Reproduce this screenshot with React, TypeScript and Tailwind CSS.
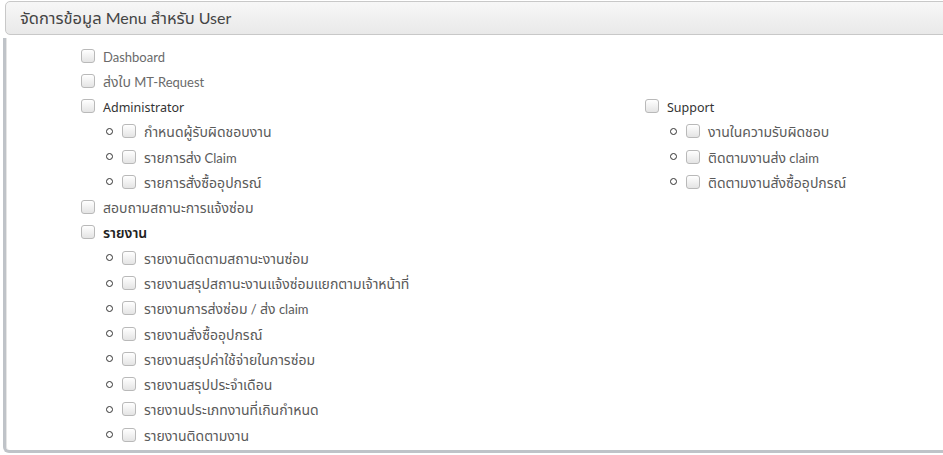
import React from "react";

const font = { fontFamily: '"Noto Sans", "Noto Sans Thai", Tahoma, sans-serif' };

function Mixed({ text, thai = "text-[14px]", latin = "text-[13px]" }: { text: string; thai?: string; latin?: string }) {
  const parts = text.split(/([\u0E00-\u0E7F]+)/).filter((p) => p.length > 0);
  return (
    <>
      {parts.map((p, i) =>
        /[\u0E00-\u0E7F]/.test(p) ? (
          <span key={i} className={thai}>
            {p}
          </span>
        ) : (
          <span key={i} className={latin} style={{ fontFamily: 'Lato, "Noto Sans", sans-serif' }}>
            {p}
          </span>
        )
      )}
    </>
  );
}

function Box() {
  return (
    <span className="inline-block w-[14px] h-[14px] rounded-[3px] border border-[#b9b9b9] bg-gradient-to-b from-[#ffffff] to-[#e4e4e4] shrink-0" />
  );
}

function Row({ label, cls = "text-[#5a5a5a]", plain = false }: { label: string; cls?: string; plain?: boolean }) {
  return (
    <div className="flex items-center h-[25.27px] leading-none">
      <Box />
      <span className={`ml-[8px] whitespace-nowrap ${cls}`}>
        {plain ? <span className="text-[12.5px]">{label}</span> : <Mixed text={label} />}
      </span>
    </div>
  );
}

function Sub({ label }: { label: string }) {
  return (
    <div className="flex items-center h-[25.27px] leading-none">
      <span className="inline-block w-[7px] h-[7px] rounded-full border-[1.5px] border-[#333] shrink-0 ml-[25px]" />
      <span className="ml-[9px] flex items-center">
        <Box />
        <span className="ml-[8px] text-[#5a5a5a] whitespace-nowrap">
          <Mixed text={label} />
        </span>
      </span>
    </div>
  );
}

export default function App() {
  return (
    <div className="w-[943px] h-[455px] bg-white overflow-hidden relative" style={font}>
      <div className="ml-[5px] mt-[1px] w-[945px] h-[34px] rounded-[5px] border border-[#c8c8c8] bg-gradient-to-b from-[#f7f7f7] to-[#e9e9e9] flex items-center pl-[14px]">
        <span className="text-[#444] whitespace-nowrap">
          <Mixed text="จัดการข้อมูล Menu สำหรับ User" thai="text-[16.5px]" latin="text-[16px]" />
        </span>
      </div>
      <div className="ml-[3px] mt-[3px] w-[950px] h-[415px] border-l-[3px] border-b-[3px] border-[#bfc3c8] rounded-bl-[6px] bg-white shadow-[inset_1px_0_0_#e5e5e5] pt-[5px] pl-[75px]">
        <Row label="Dashboard" cls="text-[#6a6a6a]" />
        <Row label="ส่งใบ MT-Request" cls="text-[#6a6a6a]" />
        <div className="flex">
          <div className="w-[564px]">
            <Row label="Administrator" cls="text-[#333]" plain />
            <Sub label="กำหนดผู้รับผิดชอบงาน" />
            <Sub label="รายการส่ง Claim" />
            <Sub label="รายการสั่งซื้ออุปกรณ์" />
            <Row label="สอบถามสถานะการแจ้งซ่อม" />
            <Row label="รายงาน" cls="text-[#222] font-semibold" />
            <Sub label="รายงานติดตามสถานะงานซ่อม" />
            <Sub label="รายงานสรุปสถานะงานแจ้งซ่อมแยกตามเจ้าหน้าที่" />
            <Sub label="รายงานการส่งซ่อม / ส่ง claim" />
            <Sub label="รายงานสั่งซื้ออุปกรณ์" />
            <Sub label="รายงานสรุปค่าใช้จ่ายในการซ่อม" />
            <Sub label="รายงานสรุปประจำเดือน" />
            <Sub label="รายงานประเภทงานที่เกินกำหนด" />
            <Sub label="รายงานติดตามงาน" />
          </div>
          <div>
            <Row label="Support" cls="text-[#333]" plain />
            <Sub label="งานในความรับผิดชอบ" />
            <Sub label="ติดตามงานส่ง claim" />
            <Sub label="ติดตามงานสั่งซื้ออุปกรณ์" />
          </div>
        </div>
      </div>
    </div>
  );
}
